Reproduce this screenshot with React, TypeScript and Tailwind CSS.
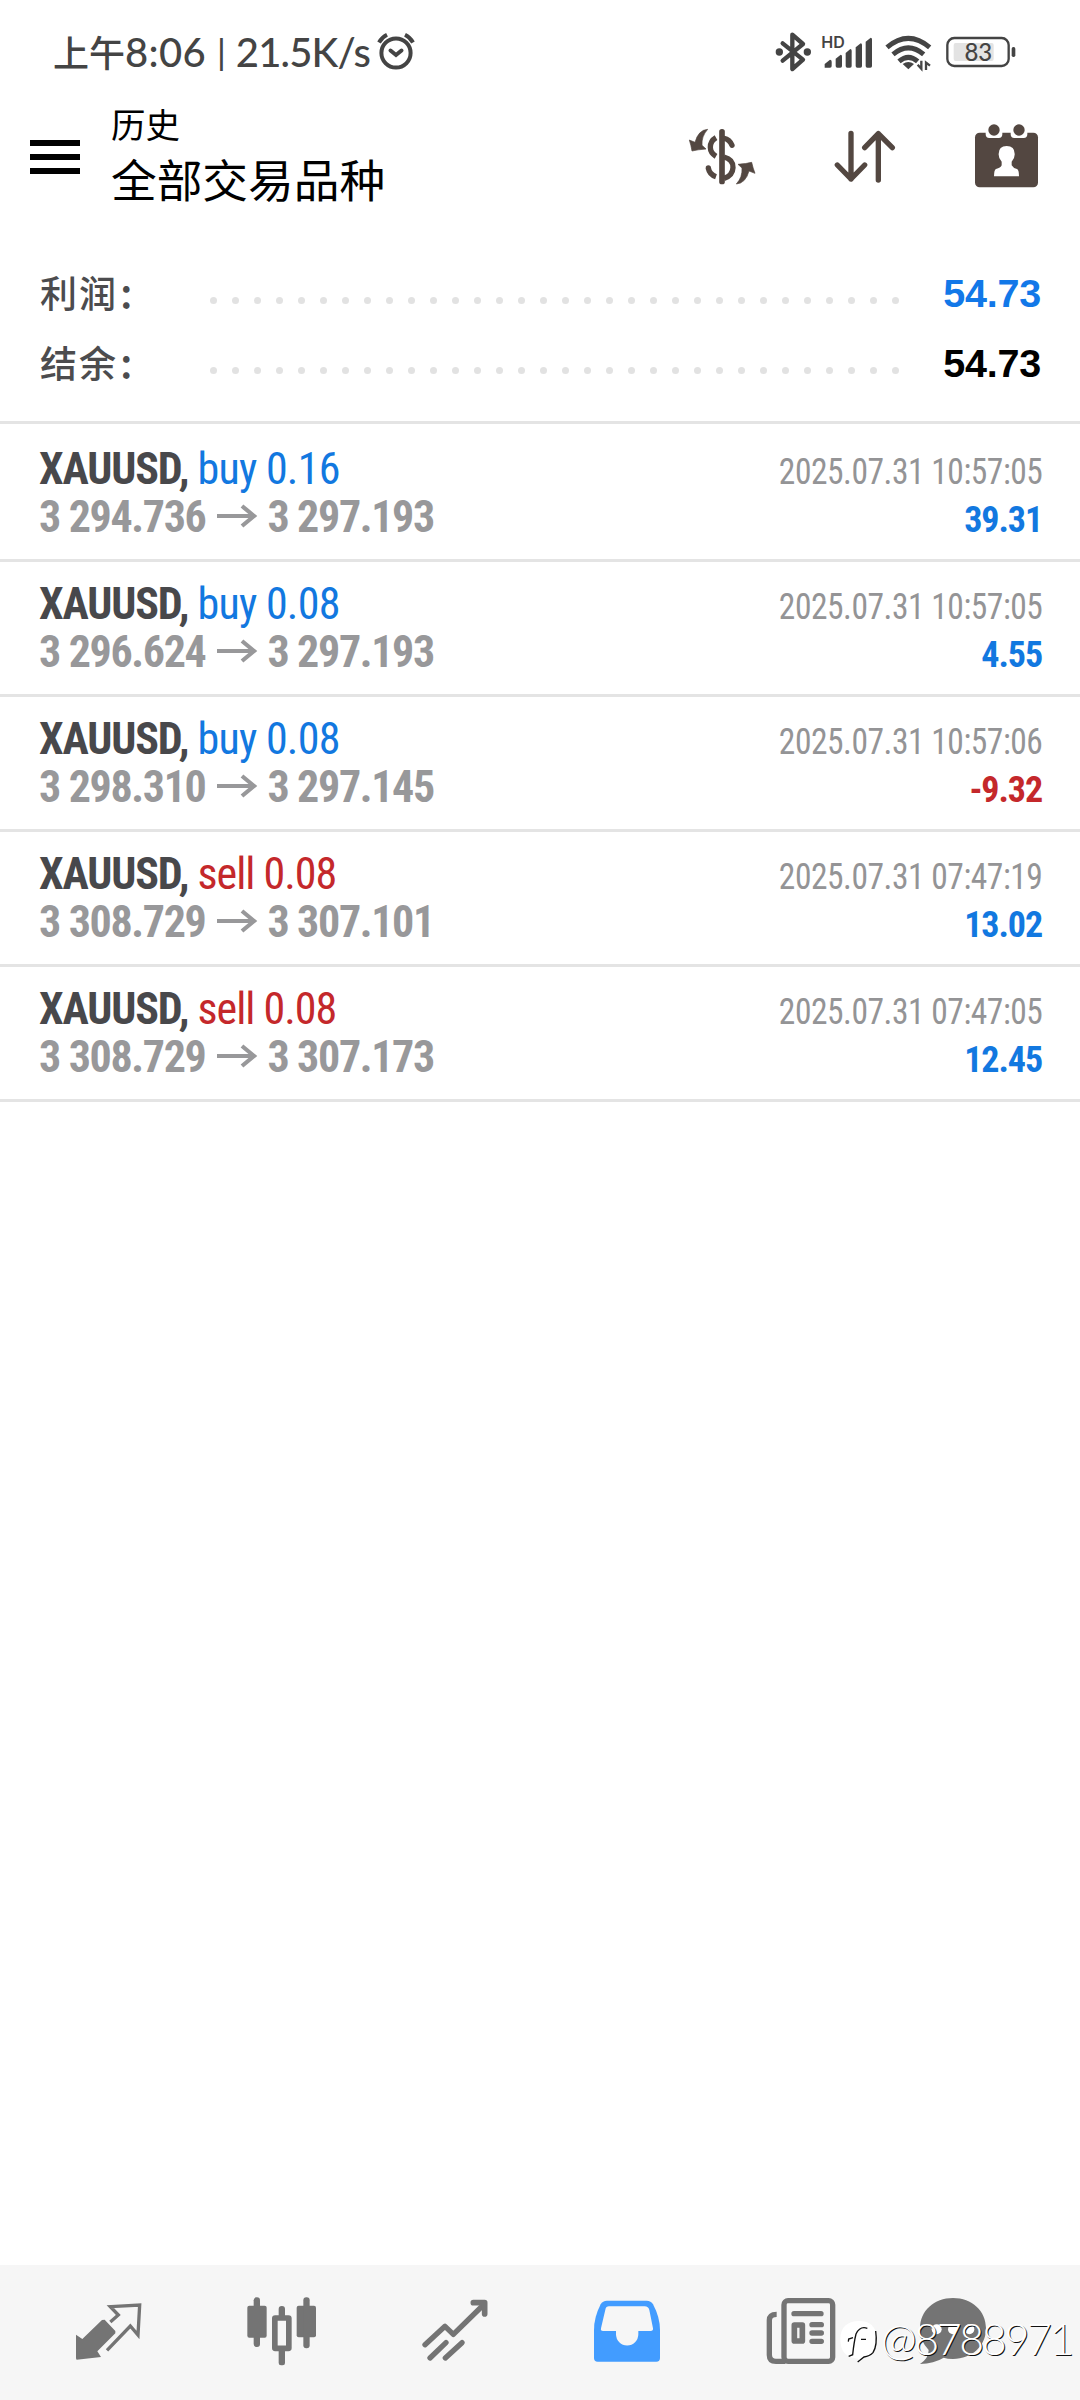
import type { ReactNode } from "react";
import clsx from "clsx";

type Deal = {
  side: "buy" | "sell";
  volume: string;
  open: string;
  close: string;
  time: string;
  profit: string;
};

const deals: Deal[] = [
  { side: "buy", volume: "0.16", open: "3 294.736", close: "3 297.193", time: "2025.07.31 10:57:05", profit: "39.31" },
  { side: "buy", volume: "0.08", open: "3 296.624", close: "3 297.193", time: "2025.07.31 10:57:05", profit: "4.55" },
  { side: "buy", volume: "0.08", open: "3 298.310", close: "3 297.145", time: "2025.07.31 10:57:06", profit: "-9.32" },
  { side: "sell", volume: "0.08", open: "3 308.729", close: "3 307.101", time: "2025.07.31 07:47:19", profit: "13.02" },
  { side: "sell", volume: "0.08", open: "3 308.729", close: "3 307.173", time: "2025.07.31 07:47:05", profit: "12.45" },
];

function StatusBar() {
  return (
    <div className="flex h-[105px] items-start justify-between pr-[63px] pl-[53px] text-[#444]">
      <div className="flex items-center gap-[6px] pt-[21px]">
        <p className="flex items-baseline font-['Lato','Noto_Sans_CJK_SC',sans-serif] text-[40px] leading-[60px] font-medium whitespace-pre">
          <span className="font-['Noto_Sans_CJK_SC',sans-serif] text-[36px] font-medium">上午</span>
          <span className="tracking-[0.300px]">8:06</span>
          <span className="mr-[10px] ml-[11px] -translate-y-[2px] text-[35px]">|</span>
          <span className="tracking-[-0.800px]">21.5K/s</span>
        </p>
        <svg className="h-[40px] w-[40px]" viewBox="0 0 40 40" fill="none" stroke="currentColor" strokeWidth="4" strokeLinecap="round">
          <circle cx="20" cy="21" r="14.600" />
          <path d="M3 10.500C5 7 7.500 4.500 11 2.800M37 10.500C35 7 32.500 4.500 29 2.800" strokeLinecap="butt" />
          <path d="M14.500 18.500L20 23L25.500 18.500" />
        </svg>
      </div>
      <div className="flex pt-[28px]">
        <svg className="h-[48px] w-[243px]" viewBox="0 0 729 144" fill="none" stroke="currentColor">
          <g strokeWidth="13" strokeLinecap="round" strokeLinejoin="round">
            <path d="M26 46L87 95L55 123V20L87 48L26 98" />
          </g>
          <circle cx="16" cy="72" r="11" fill="currentColor" stroke="none" />
          <circle cx="100" cy="72" r="11" fill="currentColor" stroke="none" />
          <g fill="currentColor" stroke="none">
            <path d="M152 119V108L168 95Q173 95 173 101V114Q173 119 168 119H157Q152 119 152 119Z" />
            <path d="M185 92L200 80Q204 80 204 85V114Q204 119 199 119H190Q185 119 185 114Z" />
            <path d="M215 75L229 63Q233 63 233 68V114Q233 119 228 119H220Q215 119 215 114Z" />
            <path d="M245 58L260 46Q264 46 264 51V114Q264 119 259 119H250Q245 119 245 114Z" />
            <path d="M275 41L290 29Q294 29 294 34V114Q294 119 289 119H280Q275 119 275 114Z" />
          </g>
          <text x="142" y="59" fill="currentColor" stroke="none" className="font-['Inter',sans-serif] text-[48px] font-semibold">HD</text>
          <g strokeWidth="15">
            <path d="M339 58Q403 4 467 58" />
            <path d="M357 79Q403 40 449 79" />
            <path d="M375 100Q403 76 431 100" />
          </g>
          <path d="M386 108Q403 96 420 108L403 124Z" fill="currentColor" stroke="none" />
          <path d="M442 98V122L431 110M456 126V104L468 113" strokeWidth="7" />
          <rect x="539" y="45" width="120" height="54" rx="6" fill="#e3e3e3" stroke="none" />
          <rect x="520" y="30" width="184" height="84" rx="21" strokeWidth="7" />
          <rect x="713" y="57" width="11" height="30" rx="5" fill="currentColor" stroke="none" />
          <text x="613" y="98" textAnchor="middle" fill="currentColor" stroke="none" className="font-['Lato',sans-serif] text-[72px] font-medium">83</text>
        </svg>
      </div>
    </div>
  );
}

function Header() {
  return (
    <header className="flex h-[125px] items-start text-black">
      <button className="mt-[35px] ml-[30px] flex flex-col gap-[8px]" aria-label="menu">
        <span className="h-[6px] w-[50px] bg-black" />
        <span className="h-[6px] w-[50px] bg-black" />
        <span className="h-[6px] w-[50px] bg-black" />
      </button>
      <div className="-mt-[4px] ml-[31px] flex flex-1 flex-col font-['Noto_Sans_CJK_SC',sans-serif]">
        <p className="text-[34.500px] leading-[44px]">历史</p>
        <p className="mt-[3px] text-[45.700px] leading-[60px]">全部交易品种</p>
      </div>
      <div className="flex text-[#534741]">
        <svg className="mt-[10px] h-[80px] w-[90px]" viewBox="0 0 270 240" fill="currentColor">
          <rect x="117.500" y="42" width="17" height="166" rx="8" />
          <g fill="none" stroke="currentColor" strokeWidth="16">
            <path d="M108 68Q91 78 91 97Q91 114 108 124" />
            <path d="M132 70Q149 73 156 91" strokeLinecap="round" />
            <path d="M132 126Q160 133 159 158Q158 182 132 190" />
            <path d="M85 159Q88 178 108 185" />
          </g>
          <circle cx="85" cy="159" r="8" />
          <path d="M83 43Q55 45 45 82L28 75Q33 90 36 108Q52 104 78 102L66 91Q64 64 83 43Z" stroke="currentColor" strokeWidth="2" />
          <path d="M169 207Q197 205 207 168L225 175Q219 160 215 142Q200 146 174 148L186 159Q188 186 169 207Z" stroke="currentColor" strokeWidth="2" />
        </svg>
        <svg className="mt-[24px] ml-[62px] h-[56px] w-[66px]" viewBox="0 0 198 168" fill="none" stroke="currentColor" strokeWidth="16" strokeLinecap="round" strokeLinejoin="round">
          <path d="M57 13V150M16 108L57 150L98 108" />
          <path d="M139 153V14M98 56L139 14L181 56" />
        </svg>
        <svg className="mt-[18px] mr-[41px] ml-[76px] h-[66px] w-[65px]" viewBox="0 0 195 198">
          <rect x="3" y="29" width="189" height="164" rx="14" fill="currentColor" />
          <path d="M35 20V34Q35 45 46 45H74Q85 45 85 34V20ZM110 20V34Q110 45 121 45H149Q160 45 160 34V20Z" fill="white" />
          <circle cx="60" cy="21" r="17" fill="currentColor" />
          <circle cx="135" cy="21" r="17" fill="currentColor" />
          <path d="M98 69Q122 70 122 92Q123 106 113 116V127Q117 135 129 138Q135 141 135 160H60Q60 141 66 138Q80 135 83 127V116Q73 106 74 92Q74 70 98 69Z" fill="white" />
        </svg>
      </div>
    </header>
  );
}

function SummaryRow({ label, value, valueClass }: { label: string; value: string; valueClass: string }) {
  return (
    <div className="flex h-[70px] items-center">
      <p className="-mt-[5px] w-[170px] font-['Noto_Sans_CJK_SC',sans-serif] text-[37px] leading-[70px] font-medium tracking-[2px] text-[#4c4c4e]">
        {label}
        <span className="ml-[2px] text-[42px]">:</span>
      </p>
      <div className="mt-[15px] flex w-[689px] justify-between">
        {Array.from({ length: 32 }, (_, i) => (
          <span key={i} className="size-[7px] rounded-full bg-[#e2e2e2]" />
        ))}
      </div>
      <p className={clsx("flex-1 text-right font-['Liberation_Sans',sans-serif] text-[39.500px] leading-[70px] font-bold tracking-[-0.200px]", valueClass)}>{value}</p>
    </div>
  );
}

function DealRow({ deal }: { deal: Deal }) {
  const negative = deal.profit.startsWith("-");

  return (
    <li className="h-[135px] border-b-3 border-[#e4e4e4] pt-[18px] pr-[38px] pl-[39px] font-['Roboto_Condensed','Roboto',sans-serif]">
      <div className="flex h-[48px] items-baseline justify-between leading-[48px]">
        <p className="text-[44px] whitespace-pre">
          <span className="font-bold tracking-[-1.150px] text-[#48484b]">XAUUSD, </span>
          <span className={deal.side === "buy" ? "tracking-[-0.750px] text-[#1278e0]" : "tracking-[-1px] text-[#c4282b]"}>
            {deal.side} {deal.volume}
          </span>
        </p>
        <time className="origin-right scale-x-[0.93] text-[36px] tracking-[-0.500px] text-[#949496]">{deal.time}</time>
      </div>
      <div className="flex h-[48px] items-baseline justify-between leading-[48px]">
        <p className="flex items-baseline text-[44px] font-bold tracking-[-1.350px] text-[#98989a]">
          {deal.open}
          <svg className="mr-[9px] ml-[12px] h-[24px] w-[41px] -translate-y-[4px]" viewBox="0 0 41 24" fill="none" stroke="currentColor" strokeWidth="4.200">
            <path d="M0 12H38M25 2L37 12L25 22" />
          </svg>
          {deal.close}
        </p>
        <p className={clsx("text-[36px] font-bold tracking-[-1.100px]", negative ? "text-[#c4282b]" : "text-[#1278e0]")}>{deal.profit}</p>
      </div>
    </li>
  );
}

function NavItem({ children, className }: { children: ReactNode; className?: string }) {
  return (
    <svg className={clsx("h-[78px] w-[78px]", className)} viewBox="0 0 234 234" fill="none" stroke="currentColor">
      {children}
    </svg>
  );
}

function NavBar() {
  return (
    <nav className="relative flex h-[135px] items-start bg-[#f6f6f6] pt-[26px] pl-[70px] text-[#747474]">
      <NavItem>
        <path d="M18 131L37 144L96 87L104 86L136 120V127L82 181L93 198L20 206Q18 205 18 200Z" fill="currentColor" stroke="none" />
        <path d="M121 93L145 72L121 47L209 42L204 132L181 105L111 178" strokeWidth="10" />
      </NavItem>
      <NavItem className="ml-[95px]">
        <g fill="currentColor" stroke="none">
          <rect x="13" y="44" width="58" height="96" rx="6" />
          <rect x="32" y="19" width="19" height="149" rx="9" />
          <rect x="161" y="44" width="58" height="95" rx="6" />
          <rect x="181" y="19" width="19" height="153" rx="9" />
          <rect x="107" y="45" width="19" height="40" rx="9" />
          <rect x="107" y="170" width="19" height="53" rx="7" />
        </g>
        <rect x="95.500" y="81" width="42" height="91" rx="1" strokeWidth="17" />
      </NavItem>
      <NavItem className="ml-[95px]">
        <path d="M27 161L87 106L112 130L202 42" strokeWidth="16" strokeLinecap="round" strokeLinejoin="round" />
        <path d="M172 35H206V69" strokeWidth="17" strokeLinecap="round" strokeLinejoin="round" />
        <path d="M42 201L90 155M88 201L138 155" strokeWidth="16" strokeLinecap="round" />
      </NavItem>
      <NavItem className="ml-[94px] text-[#429cff]">
        <path d="M57 29H176Q189 29 195 40Q216 79 216 117V201Q216 212 205 212H29Q18 212 18 201V117Q18 79 38 40Q44 29 57 29Z" fill="currentColor" stroke="none" />
        <path d="M63 46H170Q181 46 184 57L195 112Q196 120 188 120H151V130A33 33 0 0 1 84 130V120H45Q37 120 39 112L52 56Q54 46 63 46Z" fill="#f6f6f6" stroke="none" />
      </NavItem>
      <NavItem className="ml-[96px]">
        <rect x="66" y="29" width="146" height="182" rx="12" fill="#f6f6f6" strokeWidth="16" />
        <path d="M44 70Q22 70 22 88V192Q22 211 42 211H70" strokeWidth="16" />
        <path d="M96 68H177M150 101H178M150 126H178M150 151H178" strokeWidth="16" strokeLinecap="round" />
        <rect x="97" y="102" width="24" height="48" strokeWidth="17" strokeLinejoin="round" />
      </NavItem>
      <NavItem className="ml-[74px]">
        <path d="M117 21C174 21 216 60 216 112C216 165 174 204 117 204Q100 204 89 200Q60 218 18 219Q44 202 44 177Q18 152 18 112C18 60 60 21 117 21Z" fill="currentColor" stroke="none" />
        <g fill="white" stroke="none">
          <circle cx="68" cy="115" r="15" />
          <circle cx="117" cy="115" r="15" />
          <circle cx="166" cy="115" r="15" />
        </g>
      </NavItem>
      <div className="absolute top-[52px] left-[838px] flex items-center">
        <svg className="h-[50px] w-[42px]" viewBox="0 0 126 150" fill="none">
          <path d="M63 12C98 12 115 30 115 62C115 96 104 115 80 121L66 134L60 125C22 122 7 102 7 66C7 32 27 12 63 12Z" fill="white" />
          <path d="M113 42Q119 84 105 107Q95 118 78 120L59 135M88 34Q66 26 54 51Q48 75 44 113L32 118M31 74L32 66L45 62M69 67H84" stroke="#111" strokeWidth="4" />
        </svg>
        <span className="-mt-[6px] ml-[1px] font-['Lato',sans-serif] text-[43px] leading-[50px] font-light tracking-[-2.400px] text-white [text-shadow:1px_1px_0_#111]">@8788971</span>
      </div>
    </nav>
  );
}

export default function App() {
  return (
    <div className="flex h-[2400px] w-[1080px] flex-col overflow-hidden bg-white">
      <StatusBar />
      <Header />
      <section className="h-[194px] border-b-3 border-[#e4e4e4] pt-[28px] pr-[39px] pl-[40px]">
        <SummaryRow label="利润" value="54.73" valueClass="text-[#1278e8]" />
        <SummaryRow label="结余" value="54.73" valueClass="text-black" />
      </section>
      <ul className="flex-1 pt-[3px]">
        {deals.map((deal, i) => (
          <DealRow key={i} deal={deal} />
        ))}
      </ul>
      <NavBar />
    </div>
  );
}
